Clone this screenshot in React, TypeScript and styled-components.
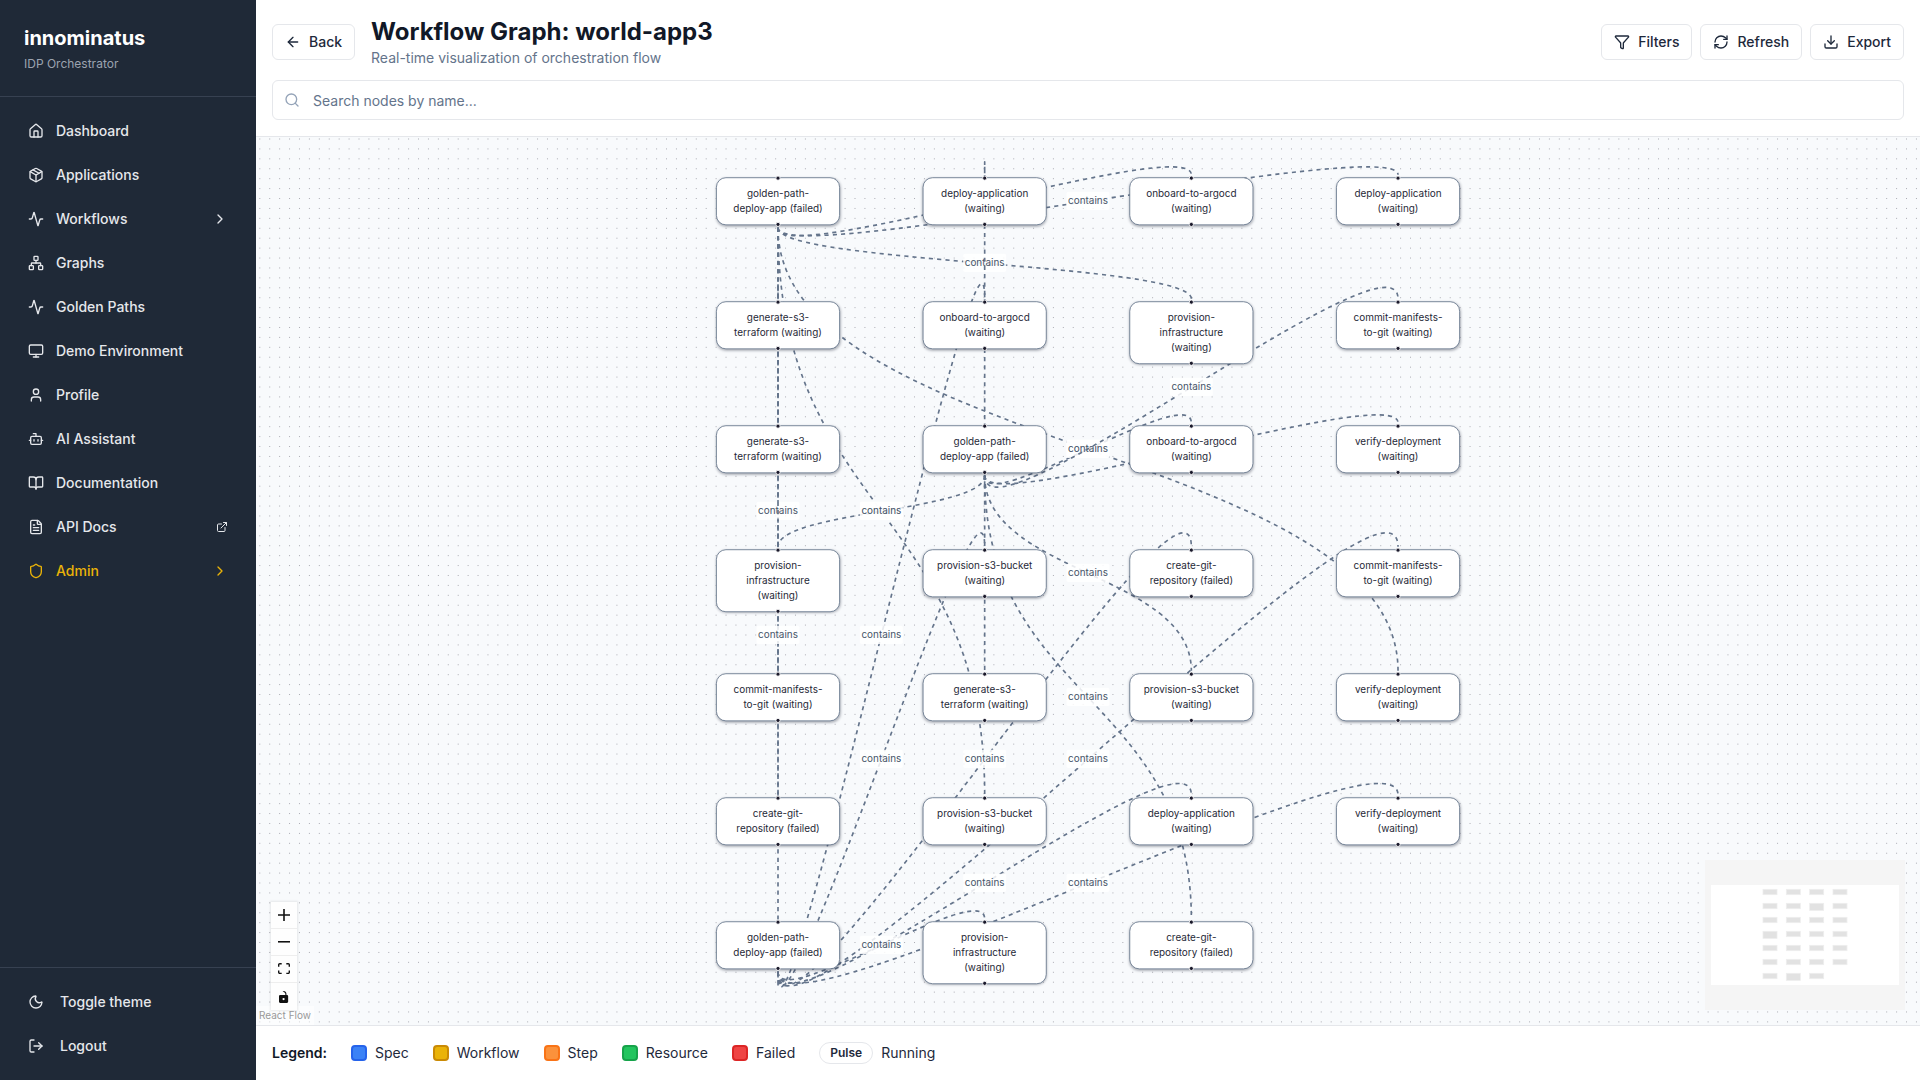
import React from 'react';
import styled, { createGlobalStyle } from 'styled-components';
import {
  Activity,
  ArrowLeft,
  Bot,
  BookOpen,
  ChevronRight,
  Download,
  ExternalLink,
  FileText,
  Filter,
  House,
  LogOut,
  Monitor,
  Moon,
  Network,
  Package,
  RefreshCw,
  Search,
  Shield,
  User,
} from 'lucide-react';

const GlobalStyle = createGlobalStyle`
  html, body {
    margin: 0;
    padding: 0;
    height: 100%;
    overflow: hidden;
    font-family: Inter, "Liberation Sans", sans-serif;
  }
  * { box-sizing: border-box; }
`;

const Page = styled.div`
  display: flex;
  width: 100%;
  height: 100vh;
  background: #fff;
`;

/* sidebar */
const Sidebar = styled.aside`
  display: flex;
  flex-direction: column;
  flex: 0 0 256px;
  background: #1f2937;
`;
const Brand = styled.div`
  height: 97px;
  padding: 24px 24px 0;
  border-bottom: 1px solid #374151;
`;
const BrandName = styled.div`
  font-size: 20px;
  line-height: 28px;
  font-weight: 700;
  color: #fff;
`;
const BrandSub = styled.div`
  margin-top: 4px;
  font-size: 12px;
  line-height: 16px;
  color: #9ca3af;
`;
const Nav = styled.nav`
  display: flex;
  flex-direction: column;
  flex: 1;
  gap: 8px;
  padding: 16px;
`;
const NavItem = styled.a<{ $active?: boolean }>`
  display: flex;
  align-items: center;
  gap: 12px;
  height: 36px;
  padding: 0 12px;
  font-size: 14px;
  line-height: 20px;
  font-weight: 500;
  color: ${(p) => (p.$active ? '#eab308' : '#e5e7eb')};
  & > span { flex: 1; }
`;
const SideFoot = styled.div`
  display: flex;
  flex-direction: column;
  gap: 8px;
  padding: 16px;
  border-top: 1px solid #374151;
`;
const FootItem = styled(NavItem)`
  gap: 16px;
`;

/* header */
const Main = styled.main`
  display: flex;
  flex-direction: column;
  flex: 1;
  min-width: 0;
`;
const Header = styled.header`
  display: flex;
  flex-direction: column;
  gap: 12px;
  height: 137px;
  padding: 16px;
  border-bottom: 1px solid #e5e7eb;
`;
const TopRow = styled.div`
  display: flex;
  align-items: center;
  gap: 16px;
`;
const TitleBlock = styled.div`
  flex: 1;
`;
const Title = styled.h1`
  margin: 0;
  font-size: 24px;
  line-height: 32px;
  font-weight: 700;
  color: #111827;
`;
const Subtitle = styled.p`
  margin: 0;
  font-size: 14px;
  line-height: 20px;
  color: #64748b;
`;
const Actions = styled.div`
  display: flex;
  gap: 8px;
`;
const Button = styled.button`
  display: flex;
  align-items: center;
  gap: 8px;
  height: 36px;
  padding: 0 12px;
  font: 500 14px/20px Inter, sans-serif;
  color: #1e293b;
  background: #fff;
  border: 1px solid #e5e7eb;
  border-radius: 6px;
`;
const SearchBox = styled.div`
  display: flex;
  align-items: center;
  gap: 13px;
  height: 40px;
  padding: 0 11px;
  border: 1px solid #e5e7eb;
  border-radius: 6px;
  color: #94a3b8;
`;
const SearchInput = styled.input`
  flex: 1;
  padding: 0;
  border: 0;
  outline: 0;
  font: 400 14px Inter, sans-serif;
  &::placeholder { color: #64748b; opacity: 1; }
`;

/* flow canvas */
const Canvas = styled.section`
  position: relative;
  flex: 1;
  min-height: 0;
  overflow: hidden;
  background: #f8fafc;
`;
const Dots = styled.svg`
  position: absolute;
  inset: 0;
  width: 100%;
  height: 100%;
`;
const Viewport = styled.div`
  position: absolute;
  left: 0;
  top: 0;
  transform-origin: 0 0;
  transform: translate(460px, 40.3px) scale(0.8267);
`;
const EdgeLayer = styled.svg`
  position: absolute;
  left: 0;
  top: 0;
  width: 1px;
  height: 1px;
  overflow: visible;
`;
const EdgePath = styled.path`
  fill: none;
  stroke: #64748b;
  stroke-width: 2;
  stroke-dasharray: 5;
`;
const EdgeLabelBg = styled.rect`
  fill: #fff;
  fill-opacity: 0.85;
`;
const EdgeLabelText = styled.text`
  font: 400 12px Inter, sans-serif;
  fill: #475569;
  text-anchor: middle;
  dominant-baseline: central;
`;
const Node = styled.div<{ $col: number; $row: number }>`
  position: absolute;
  left: ${(p) => p.$col * 250}px;
  top: ${(p) => p.$row * 150}px;
  width: 150px;
  padding: 10px 16px;
  font-size: 12px;
  line-height: 18px;
  text-align: center;
  color: #1f2937;
  background: #fff;
  border: 1px solid #64748b;
  border-radius: 12px;
  box-shadow: 0 1px 3px rgba(15, 23, 42, 0.3);
`;
const Handle = styled.span<{ $side: 'top' | 'bottom' }>`
  position: absolute;
  left: 50%;
  ${(p) => p.$side}: 0;
  width: 6px;
  height: 6px;
  background: #1a192b;
  border: 1px solid #fff;
  border-radius: 50%;
  transform: translate(-50%, ${(p) => (p.$side === 'top' ? '-50%' : '50%')});
`;

/* overlays on the canvas */
const Controls = styled.div`
  position: absolute;
  left: 15px;
  bottom: 15px;
  z-index: 2;
  display: flex;
  flex-direction: column;
  box-shadow: 0 0 2px 1px rgba(0, 0, 0, 0.08);
`;
const ControlButton = styled.div`
  display: flex;
  align-items: center;
  justify-content: center;
  width: 26px;
  height: 27px;
  background: #fefefe;
  border-bottom: 1px solid #eee;
  &:last-child { border-bottom: 0; }
  & svg { max-width: 12px; max-height: 12px; fill: #111; }
`;
const Attribution = styled.div`
  position: absolute;
  left: 0;
  bottom: 0;
  z-index: 1;
  padding: 2px 3px;
  font-size: 10px;
  line-height: 15px;
  color: #999;
  background: rgba(255, 255, 255, 0.5);
`;
const MiniMap = styled.svg`
  position: absolute;
  right: 15px;
  bottom: 15px;
  width: 200px;
  height: 150px;
`;

/* legend */
const Legend = styled.footer`
  display: flex;
  align-items: center;
  gap: 24px;
  flex: 0 0 55px;
  padding: 0 16px;
  font-size: 14px;
  line-height: 20px;
  color: #1e293b;
  border-top: 1px solid #e5e7eb;
`;
const LegendTitle = styled.span`
  font-weight: 600;
  color: #111827;
`;
const LegendItem = styled.span`
  display: flex;
  align-items: center;
  gap: 8px;
`;
const Swatch = styled.i<{ $fill: string; $edge: string }>`
  width: 16px;
  height: 16px;
  background: ${(p) => p.$fill};
  border: 2px solid ${(p) => p.$edge};
  border-radius: 4px;
`;
const PulseBadge = styled.span`
  display: flex;
  align-items: center;
  height: 22px;
  padding: 0 10px;
  font-size: 12px;
  line-height: 16px;
  font-weight: 600;
  border: 1px solid #e5e7eb;
  border-radius: 999px;
`;

const navItems = [
  { icon: House, label: 'Dashboard' },
  { icon: Package, label: 'Applications' },
  { icon: Activity, label: 'Workflows', chevron: true },
  { icon: Network, label: 'Graphs' },
  { icon: Activity, label: 'Golden Paths' },
  { icon: Monitor, label: 'Demo Environment' },
  { icon: User, label: 'Profile' },
  { icon: Bot, label: 'AI Assistant' },
  { icon: BookOpen, label: 'Documentation' },
  { icon: FileText, label: 'API Docs', external: true },
  { icon: Shield, label: 'Admin', chevron: true, active: true },
];

const legend = [
  { label: 'Spec', fill: '#3b82f6', edge: '#2563eb' },
  { label: 'Workflow', fill: '#eab308', edge: '#ca8a04' },
  { label: 'Step', fill: '#fb923c', edge: '#f97316' },
  { label: 'Resource', fill: '#22c55e', edge: '#16a34a' },
  { label: 'Failed', fill: '#ef4444', edge: '#dc2626' },
];

type GraphNode = { col: number; row: number; text: string; tall?: boolean };

const nodes: GraphNode[] = [
  { col: 0, row: 0, text: 'golden-path-deploy-app (failed)' },
  { col: 1, row: 0, text: 'deploy-application (waiting)' },
  { col: 2, row: 0, text: 'onboard-to-argocd (waiting)' },
  { col: 3, row: 0, text: 'deploy-application (waiting)' },
  { col: 0, row: 1, text: 'generate-s3-terraform (waiting)' },
  { col: 1, row: 1, text: 'onboard-to-argocd (waiting)' },
  { col: 2, row: 1, text: 'provision-infrastructure (waiting)', tall: true },
  { col: 3, row: 1, text: 'commit-manifests-to-git (waiting)' },
  { col: 0, row: 2, text: 'generate-s3-terraform (waiting)' },
  { col: 1, row: 2, text: 'golden-path-deploy-app (failed)' },
  { col: 2, row: 2, text: 'onboard-to-argocd (waiting)' },
  { col: 3, row: 2, text: 'verify-deployment (waiting)' },
  { col: 0, row: 3, text: 'provision-infrastructure (waiting)', tall: true },
  { col: 1, row: 3, text: 'provision-s3-bucket (waiting)' },
  { col: 2, row: 3, text: 'create-git-repository (failed)' },
  { col: 3, row: 3, text: 'commit-manifests-to-git (waiting)' },
  { col: 0, row: 4, text: 'commit-manifests-to-git (waiting)' },
  { col: 1, row: 4, text: 'generate-s3-terraform (waiting)' },
  { col: 2, row: 4, text: 'provision-s3-bucket (waiting)' },
  { col: 3, row: 4, text: 'verify-deployment (waiting)' },
  { col: 0, row: 5, text: 'create-git-repository (failed)' },
  { col: 1, row: 5, text: 'provision-s3-bucket (waiting)' },
  { col: 2, row: 5, text: 'deploy-application (waiting)' },
  { col: 3, row: 5, text: 'verify-deployment (waiting)' },
  { col: 0, row: 6, text: 'golden-path-deploy-app (failed)' },
  { col: 1, row: 6, text: 'provision-infrastructure (waiting)', tall: true },
  { col: 2, row: 6, text: 'create-git-repository (failed)' },
];

// every workflow node "contains" its eight steps, given as [col, row]
const edges: { from: [number, number]; to: [number, number][] }[] = [
  { from: [0, 0], to: [[3, 0], [2, 0], [0, 2], [2, 1], [0, 4], [0, 5], [1, 5], [3, 4]] },
  { from: [1, 2], to: [[1, 0], [2, 2], [3, 2], [0, 3], [3, 1], [1, 4], [2, 4], [2, 6]] },
  { from: [0, 6], to: [[0, 1], [1, 1], [1, 3], [2, 3], [3, 3], [2, 5], [3, 5], [1, 6]] },
];

const isTall = (col: number, row: number) =>
  nodes.some((n) => n.col === col && n.row === row && n.tall);

function controlOffset(d: number) {
  return d >= 0 ? 0.5 * d : 0.25 * 25 * Math.sqrt(-d);
}

function edgeGeometry(from: [number, number], to: [number, number]) {
  const sx = from[0] * 250 + 75;
  const sy = from[1] * 150 + (isTall(from[0], from[1]) ? 76 : 58) + 3;
  const tx = to[0] * 250 + 75;
  const ty = to[1] * 150 - 3;
  const off = controlOffset(ty - sy);
  return {
    d: `M${sx},${sy} C${sx},${sy + off} ${tx},${ty - off} ${tx},${ty}`,
    mx: (sx + tx) / 2,
    my: (sy + ty + 3 * (sy + off) + 3 * (ty - off)) / 8,
  };
}

function App() {
  return (
    <Page>
      <GlobalStyle />
      <Sidebar>
        <Brand>
          <BrandName>innominatus</BrandName>
          <BrandSub>IDP Orchestrator</BrandSub>
        </Brand>
        <Nav>
          {navItems.map((item) => (
            <NavItem key={item.label} $active={item.active}>
              <item.icon size={16} />
              <span>{item.label}</span>
              {item.chevron && <ChevronRight size={16} />}
              {item.external && <ExternalLink size={12} />}
            </NavItem>
          ))}
        </Nav>
        <SideFoot>
          <FootItem>
            <Moon size={16} />
            <span>Toggle theme</span>
          </FootItem>
          <FootItem>
            <LogOut size={16} />
            <span>Logout</span>
          </FootItem>
        </SideFoot>
      </Sidebar>

      <Main>
        <Header>
          <TopRow>
            <Button>
              <ArrowLeft size={16} />
              Back
            </Button>
            <TitleBlock>
              <Title>Workflow Graph: world-app3</Title>
              <Subtitle>Real-time visualization of orchestration flow</Subtitle>
            </TitleBlock>
            <Actions>
              <Button>
                <Filter size={16} />
                Filters
              </Button>
              <Button>
                <RefreshCw size={16} />
                Refresh
              </Button>
              <Button>
                <Download size={16} />
                Export
              </Button>
            </Actions>
          </TopRow>
          <SearchBox>
            <Search size={16} />
            <SearchInput placeholder="Search nodes by name..." />
          </SearchBox>
        </Header>

        <Canvas>
          <Dots>
            <defs>
              <pattern
                id="dots"
                width="9.92"
                height="9.92"
                patternUnits="userSpaceOnUse"
                patternTransform="translate(3.3 1.5)"
              >
                <circle cx="0.5" cy="0.5" r="0.5" fill="#91919a" />
              </pattern>
            </defs>
            <rect width="100%" height="100%" fill="url(#dots)" />
          </Dots>

          <Viewport>
            <EdgeLayer>
              {edges.map((group) =>
                group.to.map((to) => {
                  const e = edgeGeometry(group.from, to);
                  return (
                    <g key={`${group.from}-${to}`}>
                      <EdgePath d={e.d} />
                      <EdgeLabelBg x={e.mx - 26} y={e.my - 11.5} width={52} height={22} rx={2} />
                      <EdgeLabelText x={e.mx} y={e.my - 1}>
                        contains
                      </EdgeLabelText>
                    </g>
                  );
                })
              )}
            </EdgeLayer>
            {nodes.map((n) => (
              <Node key={`${n.col}-${n.row}`} $col={n.col} $row={n.row}>
                <Handle $side="top" />
                {n.text}
                <Handle $side="bottom" />
              </Node>
            ))}
          </Viewport>

          <Controls>
            <ControlButton>
              <svg viewBox="0 0 32 32">
                <path d="M32 18.133H18.133V32h-4.266V18.133H0v-4.266h13.867V0h4.266v13.867H32z" />
              </svg>
            </ControlButton>
            <ControlButton>
              <svg viewBox="0 0 32 5">
                <path d="M0 0h32v4.2H0z" />
              </svg>
            </ControlButton>
            <ControlButton>
              <svg viewBox="0 0 32 30">
                <path d="M3.692 4.63c0-.53.4-.938.939-.938h5.215V0H4.708C2.13 0 0 2.054 0 4.63v5.216h3.692V4.63zM27.354 0h-5.2v3.692h5.17c.53 0 .984.4.984.939v5.215H32V4.631A4.624 4.624 0 0027.354 0zm.954 24.83c0 .532-.4.94-.939.94h-5.215v3.768h5.215c2.577 0 4.631-2.13 4.631-4.707v-5.139h-3.692v5.139zm-23.677.94c-.531 0-.939-.4-.939-.94v-5.138H0v5.139c0 2.577 2.13 4.707 4.708 4.707h5.138V25.77H4.631z" />
              </svg>
            </ControlButton>
            <ControlButton>
              <svg viewBox="0 0 25 32">
                <path d="M21.333 10.667H19.81V7.619C19.81 3.429 16.38 0 12.19 0c-4.114 1.828-1.37 2.133.305 2.438 1.676.305 4.42 2.59 4.42 5.181v3.048H3.047A3.056 3.056 0 000 13.714v15.238A3.056 3.056 0 003.048 32h18.285a3.056 3.056 0 003.048-3.048V13.714a3.056 3.056 0 00-3.048-3.047zM12.19 24.533a3.056 3.056 0 01-3.047-3.047 3.056 3.056 0 013.047-3.048 3.056 3.056 0 013.048 3.048 3.056 3.056 0 01-3.048 3.047z" />
              </svg>
            </ControlButton>
          </Controls>
          <Attribution>React Flow</Attribution>

          <MiniMap viewBox="0 0 200 150">
            <rect width="200" height="150" fill="#f5f5f5" />
            <rect x="6" y="25" width="188" height="100" fill="#fff" />
            {nodes.map((n) => (
              <rect
                key={`${n.col}-${n.row}`}
                x={58 + n.col * 23.33}
                y={29.3 + n.row * 14}
                width={14}
                height={n.tall ? 7.1 : 5.4}
                fill="#e2e2e2"
                stroke="#eee"
                strokeWidth={0.8}
              />
            ))}
          </MiniMap>
        </Canvas>

        <Legend>
          <LegendTitle>Legend:</LegendTitle>
          {legend.map((l) => (
            <LegendItem key={l.label}>
              <Swatch $fill={l.fill} $edge={l.edge} />
              {l.label}
            </LegendItem>
          ))}
          <LegendItem>
            <PulseBadge>Pulse</PulseBadge>
            Running
          </LegendItem>
        </Legend>
      </Main>
    </Page>
  );
}

export default App;
